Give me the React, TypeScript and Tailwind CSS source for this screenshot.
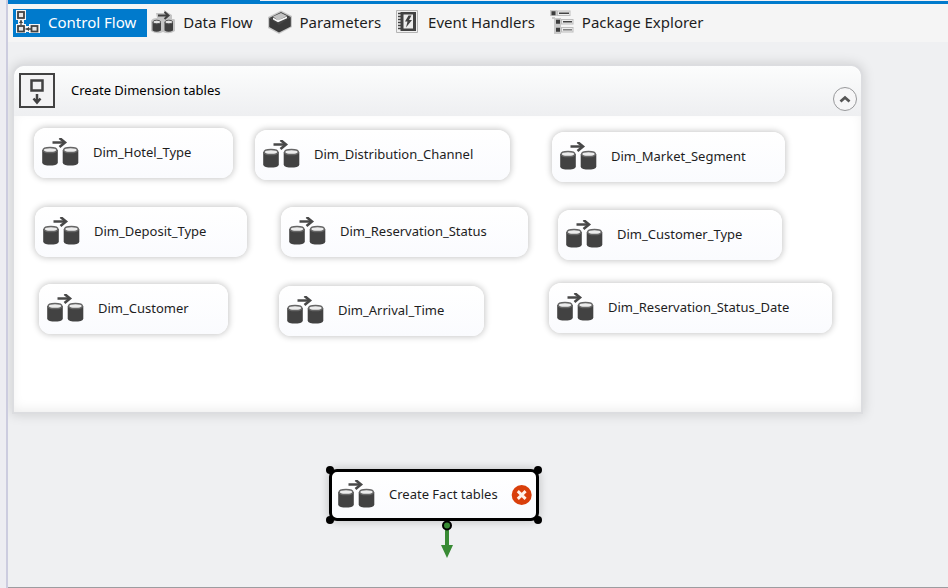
import type { ReactNode } from "react";

type TaskNode = { label: string; place: string };

const tasks: TaskNode[] = [
  { label: "Dim_Hotel_Type", place: "left-[22px] top-[63px] w-[199px]" },
  { label: "Dim_Distribution_Channel", place: "left-[243px] top-[65px] w-[255px]" },
  { label: "Dim_Market_Segment", place: "left-[540px] top-[67px] w-[233px]" },
  { label: "Dim_Deposit_Type", place: "left-[23px] top-[142px] w-[212px]" },
  { label: "Dim_Reservation_Status", place: "left-[269px] top-[142px] w-[247px]" },
  { label: "Dim_Customer_Type", place: "left-[546px] top-[145px] w-[224px]" },
  { label: "Dim_Customer", place: "left-[27px] top-[219px] w-[189px]" },
  { label: "Dim_Arrival_Time", place: "left-[267px] top-[221px] w-[205px]" },
  { label: "Dim_Reservation_Status_Date", place: "left-[537px] top-[218px] w-[283px]" },
];

function ControlFlowIcon() {
  return (
    <svg viewBox="0 0 24 24" className="h-6 w-6 shrink-0" aria-hidden="true">
      <g fill="#f5f5f5">
        <rect x="0" y="0" width="10" height="10" />
        <rect x="0" y="14" width="10" height="9" />
        <rect x="13" y="14" width="11" height="9" />
        <rect x="2" y="9" width="6" height="6" />
        <rect x="9" y="16" width="6" height="6" />
      </g>
      <g fill="#e6e6e6" stroke="#424242" strokeWidth="1.800">
        <rect x="2" y="2" width="6" height="6" />
        <rect x="2" y="16" width="6" height="5.500" />
        <rect x="15.500" y="16" width="6" height="5.500" />
      </g>
      <path d="M5 10v5M9.500 19H15" stroke="#424242" strokeWidth="1.300" />
      <path d="M2.800 13 5 10.500 7.200 13zM13 16.800v4.400L10.500 19z" fill="#424242" />
    </svg>
  );
}

function DataFlowTabIcon() {
  return (
    <svg viewBox="0 0 24 24" className="h-6 w-6 shrink-0" aria-hidden="true">
      <path d="M5 3h8V0l8 5v4h2q1 0 1 2v10q-6 4-12 1-6 3-12-1V11q1-3 6-3z" fill="#c4c4c4" />
      <path d="M1.500 12v8.500q4 2.500 8.500 0V12zM13.500 12v8.500q4 2.500 8.500 0V12z" fill="#3f3f3f" />
      <ellipse cx="5.800" cy="12" rx="3.900" ry="1.800" fill="#e4e4e4" stroke="#555" />
      <ellipse cx="17.800" cy="12" rx="3.900" ry="1.800" fill="#e4e4e4" stroke="#555" />
      <path d="M7 5.500h10M13.500 2l4 3.500-4 3.500" fill="none" stroke="#3f3f3f" strokeWidth="2" />
    </svg>
  );
}

function ParametersIcon() {
  return (
    <svg viewBox="0 0 24 24" className="h-6 w-6 shrink-0" aria-hidden="true">
      <path d="M0 7 13 .5 24 6v11L11 24 0 18z" fill="#c8c8c8" />
      <path d="M1.200 8 11 13l11.800-6v9.500L11 22.500l-9.800-5.500z" fill="#3a3a3a" />
      <path d="M1.200 8 13 2l9.800 5L11 15z" fill="#454545" />
      <path d="M5 6.500 13 3l6 3-9 4.500z" fill="#c4c4c4" />
      <path d="M5 7.500 10 10.200l9-3.800v1.800L10 12.300 5 9.500z" fill="#fafafa" />
    </svg>
  );
}

function EventHandlersIcon() {
  return (
    <svg viewBox="0 0 24 24" className="h-6 w-6 shrink-0" aria-hidden="true">
      <path d="M.5.500h21v22H.5z" fill="#f0f0f0" stroke="#b4b4b4" />
      <path d="M4.500 2H20v19H4.500z" fill="#424242" />
      <path d="M7.500 4.500h9.500v14H7.500z" fill="#ededed" />
      <path d="M2 3.500h4M2 6.500h4M2 9.500h4M2 12.500h4M2 15.500h4M2 18.500h4" stroke="#424242" strokeWidth="1.500" />
      <path d="m12.500 5.500-3.500 6h2.500l-1.500 6 6-7.500h-3l2.500-4.500z" fill="#424242" />
    </svg>
  );
}

function PackageExplorerIcon() {
  return (
    <svg viewBox="0 0 24 24" className="h-6 w-6 shrink-0" aria-hidden="true">
      <path d="M0 0h7v6H0zM4 8h7v16H4z" fill="#c9c9c9" />
      <path d="M2 7h3v2H2z" fill="#c9c9c9" />
      <g fill="#ededed" stroke="#bdbdbd">
        <rect x="7.500" y="1" width="12.500" height="4.500" />
        <rect x="11.500" y="9.500" width="11.500" height="4.500" />
        <rect x="11.500" y="17.500" width="11.500" height="4.500" />
      </g>
      <path d="M1.500 1.200h4v4h-4zM6 9.700h4v4H6zM6 17.700h4v4H6z" fill="#3c3c3c" />
      <path d="M9 3.300h10M13 11.800h9" stroke="#424242" strokeWidth="1.400" />
      <path d="M13 19.800h9" stroke="#777" strokeWidth="1.400" />
    </svg>
  );
}

function DataFlowTaskIcon() {
  return (
    <svg viewBox="0 0 38 30" className="h-[30px] w-[38px] shrink-0" aria-hidden="true">
      {[0, 20.5].map((x) => (
        <g key={x} transform={`translate(${x} 0)`}>
          <path d="M.2 12v12.500q0 1.800 2.500 2.500 5 1.200 10.600 0 2.500-.7 2.500-2.500V12z" fill="#424242" />
          <ellipse cx="8" cy="12" rx="6.900" ry="2.600" fill="#ececec" stroke="#666" strokeWidth="1.500" />
        </g>
      ))}
      <path d="M10.500 4.500H23" stroke="#484848" strokeWidth="2.500" />
      <path d="M17.500 0 23 4.500 17.500 9" fill="none" stroke="#484848" strokeWidth="2.600" />
    </svg>
  );
}

function SequenceContainerIcon() {
  return (
    <svg viewBox="0 0 36 36" className="h-9 w-9 shrink-0" aria-hidden="true">
      <rect x="1" y="1" width="34" height="33" fill="#f3f3f4" stroke="#424242" strokeWidth="2" />
      <rect x="12.500" y="7.500" width="11" height="10" fill="#f3f3f4" stroke="#424242" strokeWidth="2.500" />
      <path d="M18 21v7M14.500 25.500l3.500 4 3.500-4" fill="none" stroke="#424242" strokeWidth="2.500" />
    </svg>
  );
}

function Tab({ icon, active, children }: { icon: ReactNode; active?: boolean; children: ReactNode }) {
  return (
    <button
      type="button"
      role="tab"
      aria-selected={!!active}
      className={
        active
          ? "flex h-7 items-center gap-2 whitespace-nowrap bg-[#007acc] pb-0.5 pl-[3px] pr-[11px] text-white"
          : "flex h-7 items-center gap-2 whitespace-nowrap pb-0.5 pl-1 pr-[11px] text-[#1e1e1e]"
      }
    >
      {icon}
      {children}
    </button>
  );
}

function Task({ label, place }: TaskNode) {
  return (
    <div
      className={`absolute flex h-[50px] items-center gap-[13px] whitespace-nowrap rounded-xl bg-linear-to-b from-white to-[#fafbfe] pl-2 shadow-[0_0_6px_1px_rgba(0,0,0,0.22)] ${place}`}
    >
      <DataFlowTaskIcon />
      <span>{label}</span>
    </div>
  );
}

export default function App() {
  return (
    <div className="flex min-h-screen bg-[#ededf2] font-['Noto_Sans','DejaVu_Sans',sans-serif] text-[13px] text-[#1e1e1e]">
      <div className="w-2 shrink-0 border-r-2 border-[#ccccdf]" />
      <main className="flex min-w-0 flex-1 flex-col">
        <div className="flex h-1 bg-[#007acc]">
          <div className="w-[252px]" />
          <div className="h-px flex-1 bg-[#f0f0f4]" />
        </div>
        <div
          role="tablist"
          className="flex h-[38px] items-start bg-[#f5f5f5] pl-[5px] pt-[5px] text-[15px]"
        >
          <Tab active icon={<ControlFlowIcon />}>Control Flow</Tab>
          <Tab icon={<DataFlowTabIcon />}>Data Flow</Tab>
          <Tab icon={<ParametersIcon />}>Parameters</Tab>
          <Tab icon={<EventHandlersIcon />}>Event Handlers</Tab>
          <Tab icon={<PackageExplorerIcon />}>Package Explorer</Tab>
        </div>

        <div className="relative flex-1 overflow-hidden border-b border-[#9c9ca0] bg-[#eff0f2]">
          <section className="absolute left-1 top-[22px] h-[350px] w-[851px] rounded-t-xl border-2 border-[#dcdde0] bg-white shadow-[0_0_12px_1px_rgba(0,0,0,0.13)]">
            <header className="flex h-[50px] items-center gap-4 rounded-t-xl bg-linear-to-b from-[#fcfdfd] to-[#eeeff1] pl-[5px] pr-1 text-black">
              <SequenceContainerIcon />
              <h2 className="flex-1">Create Dimension tables</h2>
              <button
                type="button"
                aria-label="Collapse"
                className="mt-4 flex h-6 w-6 items-center justify-center rounded-full border border-[#98999b] bg-[#f6f6f7]"
              >
                <svg viewBox="0 0 12 8" className="h-2 w-3" aria-hidden="true">
                  <path d="m1.500 6.500 4.500-4 4.500 4" fill="none" stroke="#555" strokeWidth="2.800" />
                </svg>
              </button>
            </header>
            <div className="pointer-events-none absolute inset-x-0 bottom-0 top-[50px] shadow-[inset_0_-4px_12px_-2px_rgba(0,0,0,0.08)]" />
            <div className="absolute -left-0.5 -top-px">
              {tasks.map((task) => (
                <Task key={task.label} {...task} />
              ))}
            </div>
          </section>

          <div className="absolute left-[321px] top-[427px] flex h-[52px] w-[210px] items-center gap-[13px] whitespace-nowrap rounded-lg border-[3px] border-black bg-linear-to-b from-white to-[#fafbfe] pl-[6px] shadow-[0_0_8px_1px_rgba(0,0,0,0.18)]">
            <DataFlowTaskIcon />
            <span className="flex-1">Create Fact tables</span>
            <svg viewBox="0 0 22 22" className="mr-1 h-[22px] w-[22px]" role="img" aria-label="Error">
              <circle cx="11" cy="11" r="10.300" fill="#d93f0b" />
              <path d="m7 7 8 8m0-8-8 8" stroke="#fff2ea" strokeWidth="3" />
            </svg>
            <i className="absolute -left-[6px] -top-[6px] h-2 w-2 rounded-full bg-black" />
            <i className="absolute -right-[6px] -top-[6px] h-2 w-2 rounded-full bg-black" />
            <i className="absolute -bottom-[6px] -left-[6px] h-2 w-2 rounded-full bg-black" />
            <i className="absolute -bottom-[6px] -right-[6px] h-2 w-2 rounded-full bg-black" />
          </div>
          <svg viewBox="0 0 14 38" className="absolute left-[432px] top-[478px] h-[38px] w-[14px]" aria-hidden="true">
            <path d="M5 8h4v17h4L7 38 1 25h4z" fill="#388a34" />
            <circle cx="7" cy="5.500" r="4" fill="#388a34" stroke="#000" strokeWidth="2" />
          </svg>
        </div>
      </main>
    </div>
  );
}
